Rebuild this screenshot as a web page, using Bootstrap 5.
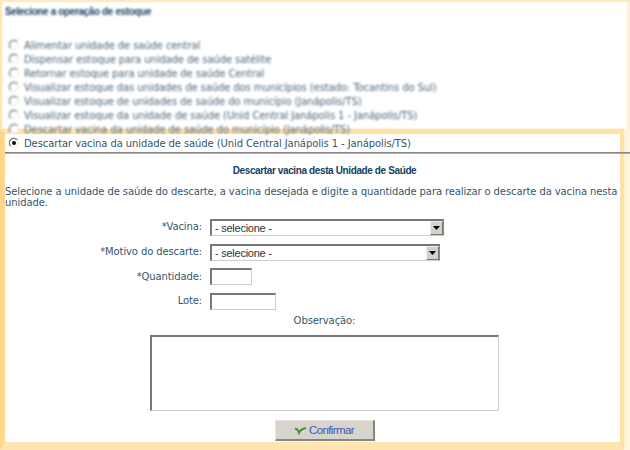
<!DOCTYPE html>
<html lang="pt-BR">
<head>
<meta charset="utf-8">
<title>Estoque de vacinas</title>
<link href="https://cdn.jsdelivr.net/npm/bootstrap@5.3.0/dist/css/bootstrap.min.css" rel="stylesheet">
<style>
body{width:630px;height:450px;font:10px/14px "DejaVu Sans",Verdana,sans-serif;letter-spacing:-.1px;color:#36566b;background:#fff}
.page{width:630px;height:450px;box-shadow:inset 0 2px 1px #ffe9bd,inset 2px 0 2px #ffe3ac,inset -3px 0 2px #fff0d2}
.blurred{height:129px;padding:5px 0 0 5px;filter:blur(1.3px);color:#4c6579}
.heading{font:bold 10px/14px "Liberation Sans",Arial,sans-serif;letter-spacing:-.38px;color:#163f5e;white-space:nowrap}
.blurred .heading{margin-bottom:20px;letter-spacing:-.38px}
.title-row{padding:10px 0 8px 24px}
.opt{height:14px;white-space:nowrap;padding-left:3px}
.opt svg{width:12px;height:12px;margin-right:4px;flex:none;position:relative;top:-1px}
.spot{width:624px;height:321px;padding-top:3px;border:5px solid #ffe2a8;border-left-color:#ffd68a;border-bottom-width:8px;border-bottom-color:#ffe5b0;border-right-width:4px;box-shadow:0 0 2px #ffe3ac,6px 0 0 #fff6e2}
.rule{height:2px;margin-top:1px;background:linear-gradient(#777,#bbb);margin-right:-10px}
.lead-in{line-height:11px;white-space:nowrap}
.lbl{width:197px;text-align:right;margin-right:8px;white-space:nowrap;padding-bottom:0;letter-spacing:-.12px}
.fields{padding-top:7px}
.line{height:24.7px}
.sunk{background:#fff;border:2px solid #777;border-right:1px solid #ccc;border-bottom:1px solid #ccc;border-radius:0;height:17px}
.pick{font:11px/14px "Liberation Sans",Arial,sans-serif;color:#333;padding-left:3px;border-right-color:#888}
.pick>b{font-weight:400;letter-spacing:-.25px}
.arrow{width:13px;height:14px;background:#d5d1c9;border:1px solid #eee;border-right-color:#777;border-bottom-color:#777}
.w1{width:234px}.w2{width:230px}.w3{width:42px}.w4{width:66px}
.memo{width:349px;height:76px;resize:none;margin-top:7px}
.confirm{width:100px;height:21px;padding:0;border-radius:0;background:#d8d4cb;border:1px solid #e8e5df;border-right:2px solid #858585;border-bottom:2px solid #858585;font:11.5px/16px "Liberation Sans",Arial,sans-serif;letter-spacing:-.6px;color:#4354bd;margin-top:9px}
.confirm svg{margin-right:2px}
</style>
</head>
<body>
<svg class="d-none"><symbol id="radio" viewBox="0 0 12 12"><circle cx="6" cy="6" r="4.500" fill="#fff" stroke="#e8e5df"/><path d="M2.600 9A4.500 4.500 0 0 1 9.200 2.800" fill="none" stroke="#777" stroke-width="1.300"/></symbol></svg>
<div class="page overflow-hidden">
<div class="blurred">
<div class="heading">Selecione a operação de estoque</div>
<div class="opt d-flex align-items-center"><svg><use href="#radio"/></svg><span>Alimentar unidade de saúde central</span></div>
<div class="opt d-flex align-items-center"><svg><use href="#radio"/></svg><span>Dispensar estoque para unidade de saúde satélite</span></div>
<div class="opt d-flex align-items-center"><svg><use href="#radio"/></svg><span>Retornar estoque para unidade de saúde Central</span></div>
<div class="opt d-flex align-items-center"><svg><use href="#radio"/></svg><span>Visualizar estoque das unidades de saúde dos municípios (estado: Tocantins do Sul)</span></div>
<div class="opt d-flex align-items-center"><svg><use href="#radio"/></svg><span>Visualizar estoque de unidades de saúde do município (Janápolis/TS)</span></div>
<div class="opt d-flex align-items-center"><svg><use href="#radio"/></svg><span>Visualizar estoque da unidade de saúde (Unid Central Janápolis 1 - Janápolis/TS)</span></div>
<div class="opt d-flex align-items-center"><svg><use href="#radio"/></svg><span>Descartar vacina da unidade de saúde do município (Janápolis/TS)</span></div>
</div>
<div class="spot">
<div class="opt d-flex align-items-center"><svg><use href="#radio"/><circle cx="6" cy="6" r="2" fill="#111"/></svg><span>Descartar vacina da unidade de saúde (Unid Central Janápolis 1 - Janápolis/TS)</span></div>
<div class="rule"></div>
<div class="heading title-row text-center">Descartar vacina desta Unidade de Saúde</div>
<div class="lead-in">Selecione a unidade de saúde do descarte, a vacina desejada e digite a quantidade para realizar o descarte da vacina nesta<br>unidade.</div>
<div class="fields">
<div class="line d-flex align-items-center"><div class="lbl">*Vacina:</div><div class="sunk pick w1 d-flex justify-content-between"><b>- selecione -</b><span class="arrow d-flex align-items-center justify-content-center"><svg width="7" height="4"><path d="M0 0h7L3.500 4z"/></svg></span></div></div>
<div class="line d-flex align-items-center"><div class="lbl">*Motivo do descarte:</div><div class="sunk pick w2 d-flex justify-content-between"><b>- selecione -</b><span class="arrow d-flex align-items-center justify-content-center"><svg width="7" height="4"><path d="M0 0h7L3.500 4z"/></svg></span></div></div>
<div class="line d-flex align-items-center"><div class="lbl">*Quantidade:</div><input class="sunk w3"></div>
<div class="line d-flex align-items-center"><div class="lbl">Lote:</div><input class="sunk w4"></div>
</div>
<div class="text-center ps-4">Observação:</div>
<div class="d-flex flex-column align-items-center ps-4"><textarea class="sunk memo"></textarea>
<button class="btn confirm d-flex align-items-center justify-content-center"><svg width="13" height="10"><path d="M1 3.500Q4 4 5 7.500Q7 4 12 3" fill="none" stroke="#3b9438" stroke-width="2.200"/></svg>Confirmar</button></div>
</div>
</div>
<script src="https://cdn.jsdelivr.net/npm/bootstrap@5.3.0/dist/js/bootstrap.bundle.min.js"></script>
</body>
</html>
